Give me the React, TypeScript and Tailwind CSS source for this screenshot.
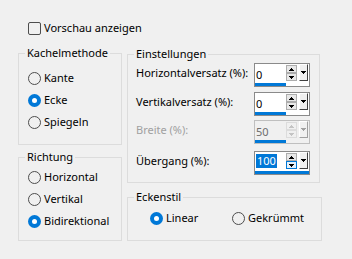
import React from "react";

function cn(...parts: (string | false | undefined)[]) {
  return parts.filter(Boolean).join(" ");
}

function UpArrow({ color = "#000000" }: { color?: string }) {
  return (
    <svg width="5" height="3" viewBox="0 0 5 3" className="block">
      <path d="M2 0h1v1h1v1h1v1h-5v-1h1v-1h1z" fill={color} />
    </svg>
  );
}

function DownArrow({ color = "#000000" }: { color?: string }) {
  return (
    <svg width="5" height="3" viewBox="0 0 5 3" className="block">
      <path d="M0 0h5v1h-1v1h-1v1h-1v-1h-1v-1h-1z" fill={color} />
    </svg>
  );
}

function Radio({ label, checked }: { label: string; checked?: boolean }) {
  return (
    <div className="flex h-[22px] items-center">
      {checked ? (
        <span className="flex h-[13px] w-[13px] items-center justify-center rounded-full bg-[#0078d7]">
          <span className="h-[5px] w-[5px] rounded-full bg-white" />
        </span>
      ) : (
        <span className="h-[13px] w-[13px] rounded-full border border-[#4d4d4d]" />
      )}
      <span className="ml-[3px]">{label}</span>
    </div>
  );
}

function GroupBox({
  title,
  className,
  children,
}: {
  title: string;
  className?: string;
  children: React.ReactNode;
}) {
  return (
    <fieldset className={cn("border border-[#dcdcdc]", className)}>
      <legend className="ml-[6px] px-[2px]">{title}</legend>
      {children}
    </fieldset>
  );
}

interface SpinProps {
  value: string;
  selected?: boolean;
  disabled?: boolean;
  hoverDown?: boolean;
}
function Spin({ value, selected, disabled, hoverDown }: SpinProps) {
  const arrow = disabled ? "#c4c4c4" : "#000000";
  return (
    <div
      className={cn(
        "flex h-[24px] w-[56px] flex-col border",
        disabled ? "border-[#bfbfbf] bg-[#f0f0f0]" : "border-[#8a8a8a] bg-white"
      )}
    >
      <div className="flex flex-1">
        <div className="w-[31px] pl-[1px] pt-[1px]">
          {selected ? (
            <span className="inline-block h-[14px] bg-[#0078d7] px-[1px] leading-[14px] text-white">
              {value}
            </span>
          ) : (
            <span className={cn("block pt-[2px]", disabled && "text-[#6d6d6d]")}>
              {value}
            </span>
          )}
        </div>
        <div className="flex w-[11px] flex-col pt-[1px]">
          <div
            className={cn(
              "flex h-[8px] items-center justify-center border",
              disabled ? "border-[#dcdcdc] bg-[#f0f0f0]" : "border-[#adadad] bg-[#e8e8e8]"
            )}
          >
            <UpArrow color={arrow} />
          </div>
          <div
            className={cn(
              "flex h-[8px] items-center justify-center border",
              hoverDown
                ? "border-[#0078d7] bg-[#e5f1fb]"
                : disabled
                  ? "border-[#dcdcdc] bg-[#f0f0f0]"
                  : "border-[#adadad] bg-[#e8e8e8]"
            )}
          >
            <DownArrow color={arrow} />
          </div>
        </div>
        <div
          className={cn(
            "ml-[2px] flex h-[17px] w-[9px] items-center justify-center border-b border-l border-r border-t bg-[#f0f0f0]",
            disabled
              ? "border-b-[#a0a0a0] border-l-white border-r-[#a0a0a0] border-t-white"
              : "border-b-[#404040] border-l-white border-r-[#404040] border-t-white"
          )}
        >
          <DownArrow color={disabled ? "#a0a0a0" : "#000000"} />
        </div>
      </div>
      <div className={cn("h-[3px] bg-[#0078d7]", selected ? "w-full" : "w-[31px]")} />
    </div>
  );
}

function SettingRow({
  label,
  className,
  disabled,
  children,
}: {
  label: string;
  className?: string;
  disabled?: boolean;
  children: React.ReactNode;
}) {
  return (
    <div className={cn("flex h-[24px] items-center", className)}>
      <span className={cn("mb-[4px] w-[118px]", disabled && "text-[#a0a0a0]")}>
        {label}
      </span>
      {children}
    </div>
  );
}

export default function App() {
  return (
    <div className="h-[259px] w-[352px] bg-[#f0f0f0] pl-[18px] pt-[20px] font-['Noto_Sans',sans-serif] text-[11px] leading-[16px] text-black">
      <div className="ml-[10px] flex h-[16px] items-center">
        <span className="h-[13px] w-[13px] rounded-[2px] border border-[#4d4d4d]" />
        <span className="ml-[3px]">Vorschau anzeigen</span>
      </div>

      <div className="mt-[9px] flex items-start gap-[5px]">
        <div className="flex w-[104px] flex-col">
          <GroupBox title="Kachelmethode">
            <div className="pb-[11px] pl-[9px] pt-[6px]">
              <Radio label="Kante" />
              <Radio label="Ecke" checked />
              <Radio label="Spiegeln" />
            </div>
          </GroupBox>
          <GroupBox title="Richtung" className="mt-[4px]">
            <div className="pb-[8px] pl-[9px] pt-[1px]">
              <Radio label="Horizontal" />
              <Radio label="Vertikal" />
              <Radio label="Bidirektional" checked />
            </div>
          </GroupBox>
        </div>

        <div className="mt-[1px] flex w-[195px] flex-col">
          <GroupBox title="Einstellungen" className="w-[193px]">
            <div className="px-[8px] pb-[7px]">
              <SettingRow label="Horizontalversatz (%):" className="mt-[1px]">
                <Spin value="0" />
              </SettingRow>
              <SettingRow label="Vertikalversatz (%):" className="mt-[5px]">
                <Spin value="0" />
              </SettingRow>
              <SettingRow label="Breite (%):" className="mt-[4px]" disabled>
                <Spin value="50" disabled />
              </SettingRow>
              <SettingRow label="Übergang (%):" className="mt-[7px]">
                <Spin value="100" selected hoverDown />
              </SettingRow>
            </div>
          </GroupBox>
          <GroupBox title="Eckenstil" className="mt-[6px] w-[195px]">
            <div className="flex pb-[11px] pl-[22px] pt-[2px]">
              <div className="w-[82px]">
                <Radio label="Linear" checked />
              </div>
              <Radio label="Gekrümmt" />
            </div>
          </GroupBox>
        </div>
      </div>
    </div>
  );
}
